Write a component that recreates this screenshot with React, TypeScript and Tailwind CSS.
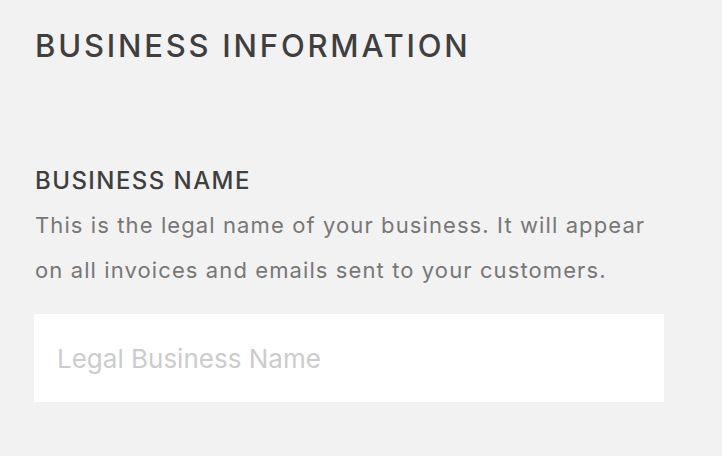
export default function App() {
  return (
    <div className="min-h-screen w-full bg-[#f2f2f2] pl-[35px] pt-[26px]" style={{ fontFamily: "Inter, 'Noto Sans', sans-serif" }}>
      <h1 className="text-[31px] leading-[40px] font-medium tracking-[0.09em] text-[#3f3f3f]">BUSINESS INFORMATION</h1>

      <div className="mt-[100px]">
        <label className="block text-[24px] leading-[30px] font-medium tracking-[0.06em] text-[#3f3f3f]">BUSINESS NAME</label>
        <p className="mt-[7px] w-[625px] text-[22px] leading-[45px] tracking-[0.05em] text-[#777777]">
          This is the legal name of your business. It will appear on all invoices and emails sent to your customers.
        </p>
        <input
          type="text"
          placeholder="Legal Business Name"
          className="mt-[21px] block h-[88px] w-[630px] -ml-px bg-white px-[23px] text-[26px] text-[#404040] outline-none placeholder:text-[#cccccc]"
        />
      </div>
    </div>
  );
}
